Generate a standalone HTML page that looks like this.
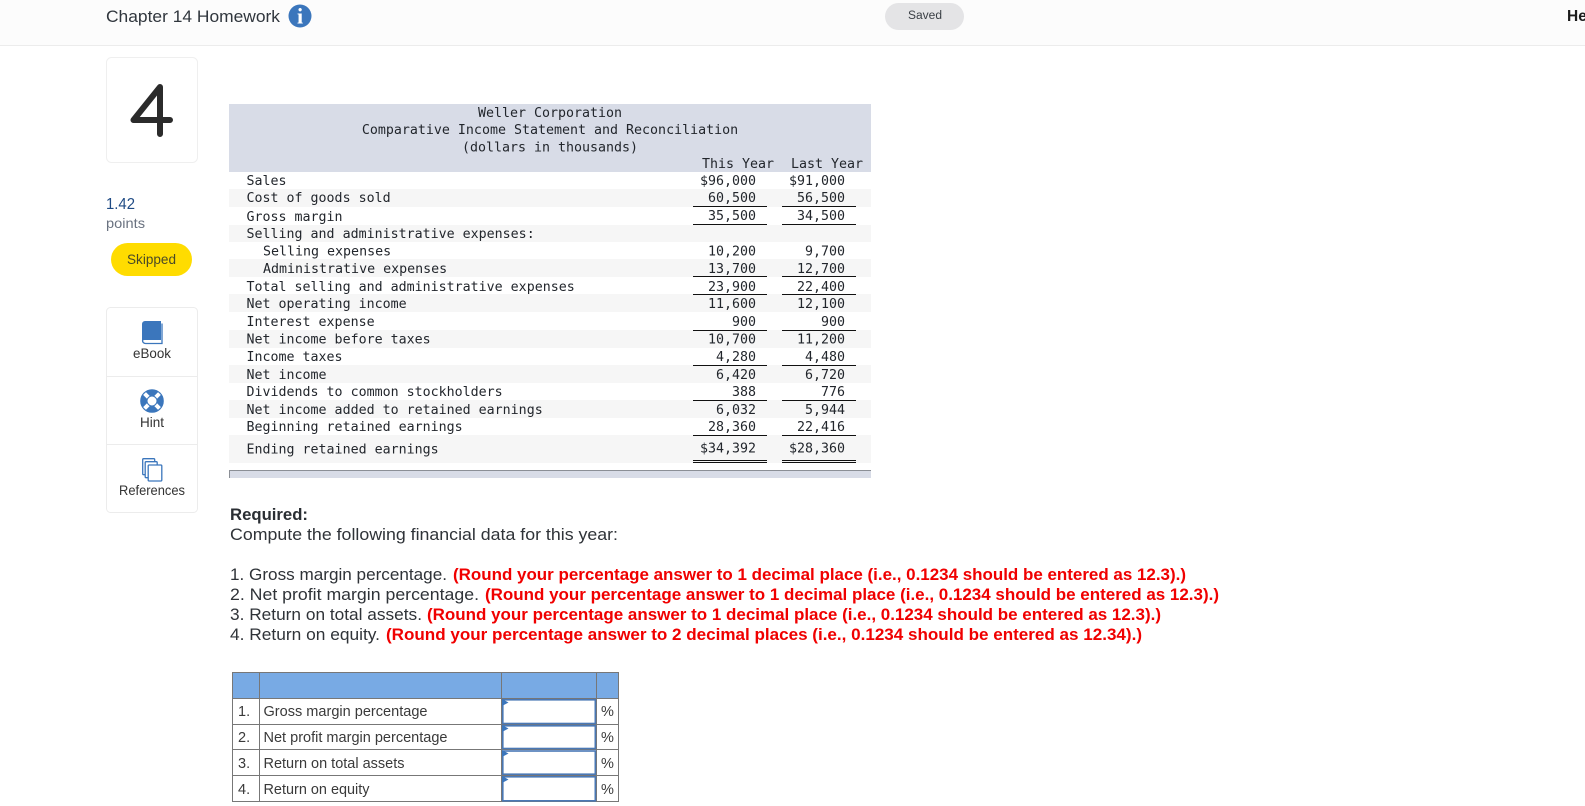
<!DOCTYPE html>
<html lang="en">
<head>
<meta charset="utf-8">
<title>Chapter 14 Homework</title>
<style>
html,body{margin:0;padding:0;background:#fff;width:1585px;height:806px;overflow:hidden}
svg{display:block;position:absolute;left:0;top:0}
text{font-family:"Liberation Sans",sans-serif;white-space:pre}
.m text{font-family:"DejaVu Sans Mono","Liberation Mono",monospace;font-size:13.3px;fill:#22262c}
.n text{text-anchor:end}
.r{font-weight:700;font-size:17px;fill:#f00000}
.b{font-size:17px;fill:#2f3338}
.t{font-size:14.5px;fill:#3a3a3a}
</style>
</head>
<body>
<svg width="1585" height="806" viewBox="0 0 1585 806" xmlns="http://www.w3.org/2000/svg">
<!-- header -->
<rect x="0" y="0" width="1585" height="45" fill="#fcfcfc"/>
<rect x="0" y="45" width="1585" height="1" fill="#ececec"/>
<text x="106" y="22" font-size="17" fill="#30363d" textLength="174" lengthAdjust="spacingAndGlyphs">Chapter 14 Homework</text>
<circle cx="300" cy="16" r="11.5" fill="#3b76bc"/>
<text x="300" y="23.500" font-size="22" font-weight="700" fill="#fff" text-anchor="middle" style="font-family:'Liberation Serif',serif">i</text>
<rect x="885" y="3" width="79" height="27" rx="13.5" fill="#e4e4e6"/>
<text x="908" y="19" font-size="11.5" fill="#3a3f45" textLength="34" lengthAdjust="spacingAndGlyphs">Saved</text>
<text x="1567" y="21" font-size="15.5" font-weight="700" fill="#1c1c1c">He</text>

<!-- question number -->
<rect x="106.5" y="57.5" width="91" height="105" rx="5" fill="#fff" stroke="#efefef"/>
<path d="M160 134V87L133.500 120H170" fill="none" stroke="#2b2b2b" stroke-width="6" stroke-linecap="round" stroke-linejoin="round"/>

<!-- sidebar -->
<text x="106" y="209" font-size="16" fill="#1f4b85" textLength="29" lengthAdjust="spacingAndGlyphs">1.42</text>
<text x="106" y="228" font-size="14" fill="#6a7280" textLength="39" lengthAdjust="spacingAndGlyphs">points</text>
<rect x="111" y="243" width="81" height="33" rx="16.5" fill="#ffdc00"/>
<text x="127" y="264" font-size="14" fill="#4a4a28" textLength="49" lengthAdjust="spacingAndGlyphs">Skipped</text>
<rect x="106.5" y="307.5" width="91" height="205" rx="4" fill="#fff" stroke="#ececec"/>
<rect x="107" y="376" width="90" height="1" fill="#ececec"/>
<rect x="107" y="444" width="90" height="1" fill="#ececec"/>
<!-- book -->
<path d="M145 321h16v19H145a3 3 0 0 0-3 2V324a3 3 0 0 1 3-3z" fill="#3b76bc"/>
<path d="M162 323.500v20H145.500a3 3 0 0 1-3-3" fill="none" stroke="#3b76bc" stroke-width="1.300"/>
<!-- lifebuoy -->
<text x="133" y="358" font-size="14" fill="#333" textLength="38" lengthAdjust="spacingAndGlyphs">eBook</text>
<circle cx="152" cy="401" r="8.200" fill="none" stroke="#3b76bc" stroke-width="6.400"/>
<path d="M148.500 397.500l-4-4M155.500 397.500l4-4M148.500 404.500l-4 4M155.500 404.500l4 4" fill="none" stroke="#fff" stroke-width="4"/>
<circle cx="152" cy="401" r="11.300" fill="none" stroke="#3b76bc" stroke-width="1"/>
<circle cx="152" cy="401" r="5" fill="none" stroke="#3b76bc" stroke-width="1"/>
<text x="140" y="427" font-size="14" fill="#333" textLength="24" lengthAdjust="spacingAndGlyphs">Hint</text>
<!-- references -->
<g fill="#fff" stroke="#3b76bc" stroke-width="1.300">
<rect x="142.700" y="458.700" width="12" height="16" rx="1"/>
<rect x="145.200" y="461.700" width="12" height="16" rx="1"/>
<rect x="148.200" y="465" width="13.600" height="16" rx="1"/>
</g>
<text x="119" y="495" font-size="14" fill="#333" textLength="66" lengthAdjust="spacingAndGlyphs">References</text>

<!-- statement -->
<rect x="229" y="104" width="642" height="68" fill="#d8dce7"/>
<g fill="#f6f6f6">
<rect x="229" y="189" width="642" height="18"/>
<rect x="229" y="225" width="642" height="17"/>
<rect x="229" y="259" width="642" height="18"/>
<rect x="229" y="294" width="642" height="18"/>
<rect x="229" y="330" width="642" height="18"/>
<rect x="229" y="365" width="642" height="18"/>
<rect x="229" y="400" width="642" height="18"/>
<rect x="229" y="435" width="642" height="28"/>
</g>
<rect x="229" y="470" width="642" height="8" fill="#d8dce7"/>
<rect x="229" y="470" width="642" height="1" fill="#8b8f96"/>
<rect x="229" y="470" width="1" height="8" fill="#8b8f96"/>
<g class="m">
<text x="550" y="117" text-anchor="middle">Weller Corporation</text>
<text x="550" y="134" text-anchor="middle">Comparative Income Statement and Reconciliation</text>
<text x="550" y="151.500" text-anchor="middle">(dollars in thousands)</text>
<text x="702" y="168">This Year</text>
<text x="791" y="168">Last Year</text>
<text x="246.500" y="185">Sales</text>
<text x="246.500" y="202">Cost of goods sold</text>
<text x="246.500" y="221">Gross margin</text>
<text x="246.500" y="238">Selling and administrative expenses:</text>
<text x="263" y="255.500">Selling expenses</text>
<text x="263" y="273">Administrative expenses</text>
<text x="246.500" y="291">Total selling and administrative expenses</text>
<text x="246.500" y="308">Net operating income</text>
<text x="246.500" y="326">Interest expense</text>
<text x="246.500" y="343.500">Net income before taxes</text>
<text x="246.500" y="361">Income taxes</text>
<text x="246.500" y="379">Net income</text>
<text x="246.500" y="396">Dividends to common stockholders</text>
<text x="246.500" y="414">Net income added to retained earnings</text>
<text x="246.500" y="431">Beginning retained earnings</text>
<text x="246.500" y="453.500">Ending retained earnings</text>
</g>
<g class="m n">
<text x="756" y="185">$96,000</text><text x="845" y="185">$91,000</text>
<text x="756" y="202">60,500</text><text x="845" y="202">56,500</text>
<text x="756" y="220">35,500</text><text x="845" y="220">34,500</text>
<text x="756" y="255.500">10,200</text><text x="845" y="255.500">9,700</text>
<text x="756" y="273">13,700</text><text x="845" y="273">12,700</text>
<text x="756" y="291">23,900</text><text x="845" y="291">22,400</text>
<text x="756" y="308">11,600</text><text x="845" y="308">12,100</text>
<text x="756" y="326">900</text><text x="845" y="326">900</text>
<text x="756" y="343.500">10,700</text><text x="845" y="343.500">11,200</text>
<text x="756" y="361">4,280</text><text x="845" y="361">4,480</text>
<text x="756" y="379">6,420</text><text x="845" y="379">6,720</text>
<text x="756" y="396">388</text><text x="845" y="396">776</text>
<text x="756" y="414">6,032</text><text x="845" y="414">5,944</text>
<text x="756" y="431">28,360</text><text x="845" y="431">22,416</text>
<text x="756" y="452.500">$34,392</text><text x="845" y="452.500">$28,360</text>
</g>
<g fill="#111">
<rect x="693" y="206" width="74" height="1"/><rect x="782" y="206" width="74" height="1"/>
<rect x="693" y="224" width="74" height="1"/><rect x="782" y="224" width="74" height="1"/>
<rect x="693" y="276" width="74" height="1"/><rect x="782" y="276" width="74" height="1"/>
<rect x="693" y="294" width="74" height="1"/><rect x="782" y="294" width="74" height="1"/>
<rect x="693" y="330" width="74" height="1"/><rect x="782" y="330" width="74" height="1"/>
<rect x="693" y="365" width="74" height="1"/><rect x="782" y="365" width="74" height="1"/>
<rect x="693" y="400" width="74" height="1"/><rect x="782" y="400" width="74" height="1"/>
<rect x="693" y="435" width="74" height="1"/><rect x="782" y="435" width="74" height="1"/>
<rect x="693" y="460" width="74" height="1"/><rect x="782" y="460" width="74" height="1"/>
<rect x="693" y="462" width="74" height="1"/><rect x="782" y="462" width="74" height="1"/>
</g>

<!-- required -->
<text x="230" y="520" font-size="17" font-weight="700" fill="#2a2e33" textLength="78" lengthAdjust="spacingAndGlyphs">Required:</text>
<text class="b" x="230" y="540" textLength="388" lengthAdjust="spacingAndGlyphs">Compute the following financial data for this year:</text>
<text class="b" x="230" y="580" textLength="217" lengthAdjust="spacingAndGlyphs">1. Gross margin percentage.</text>
<text class="r" x="453" y="580" textLength="733" lengthAdjust="spacingAndGlyphs">(Round your percentage answer to 1 decimal place (i.e., 0.1234 should be entered as 12.3).)</text>
<text class="b" x="230" y="600" textLength="249" lengthAdjust="spacingAndGlyphs">2. Net profit margin percentage.</text>
<text class="r" x="485" y="600" textLength="734" lengthAdjust="spacingAndGlyphs">(Round your percentage answer to 1 decimal place (i.e., 0.1234 should be entered as 12.3).)</text>
<text class="b" x="230" y="620" textLength="192" lengthAdjust="spacingAndGlyphs">3. Return on total assets.</text>
<text class="r" x="427" y="620" textLength="734" lengthAdjust="spacingAndGlyphs">(Round your percentage answer to 1 decimal place (i.e., 0.1234 should be entered as 12.3).)</text>
<text class="b" x="230" y="640" textLength="150" lengthAdjust="spacingAndGlyphs">4. Return on equity.</text>
<text class="r" x="386" y="640" textLength="756" lengthAdjust="spacingAndGlyphs">(Round your percentage answer to 2 decimal places (i.e., 0.1234 should be entered as 12.34).)</text>

<!-- answer table -->
<rect x="232.500" y="672.500" width="386" height="129" fill="#fff" stroke="#777"/>
<rect x="233" y="673" width="385" height="25" fill="#78aae4"/>
<g fill="#777">
<rect x="232" y="698" width="387" height="1"/>
<rect x="232" y="724" width="387" height="1"/>
<rect x="232" y="749" width="387" height="1"/>
<rect x="232" y="775" width="387" height="1"/>
<rect x="259" y="672" width="1" height="130"/>
<rect x="501" y="672" width="1" height="130"/>
<rect x="596" y="672" width="1" height="130"/>
</g>
<g fill="#fff" stroke="#4a78b5" stroke-width="1.600">
<rect x="502.800" y="699.800" width="92.500" height="23.700"/>
<rect x="502.800" y="725.800" width="92.500" height="22.700"/>
<rect x="502.800" y="751" width="92.500" height="23.200"/>
<rect x="502.800" y="776.800" width="92.500" height="24"/>
</g>
<g fill="#3b76bc">
<path d="M502 699l6.500 3.500-6.500 3.500z"/>
<path d="M502 725l6.500 3.500-6.500 3.500z"/>
<path d="M502 750l6.500 3.500-6.500 3.500z"/>
<path d="M502 776l6.500 3.500-6.500 3.500z"/>
</g>
<text class="t" x="238" y="716">1.</text>
<text class="t" x="238" y="742">2.</text>
<text class="t" x="238" y="768">3.</text>
<text class="t" x="238" y="794">4.</text>
<text class="t" x="263.500" y="716" textLength="164" lengthAdjust="spacingAndGlyphs">Gross margin percentage</text>
<text class="t" x="263.500" y="742" textLength="184" lengthAdjust="spacingAndGlyphs">Net profit margin percentage</text>
<text class="t" x="263.500" y="768" textLength="141" lengthAdjust="spacingAndGlyphs">Return on total assets</text>
<text class="t" x="263.500" y="794" textLength="106" lengthAdjust="spacingAndGlyphs">Return on equity</text>
<text class="t" x="601" y="716">%</text>
<text class="t" x="601" y="742">%</text>
<text class="t" x="601" y="768">%</text>
<text class="t" x="601" y="794">%</text>
</svg>
</body>
</html>
